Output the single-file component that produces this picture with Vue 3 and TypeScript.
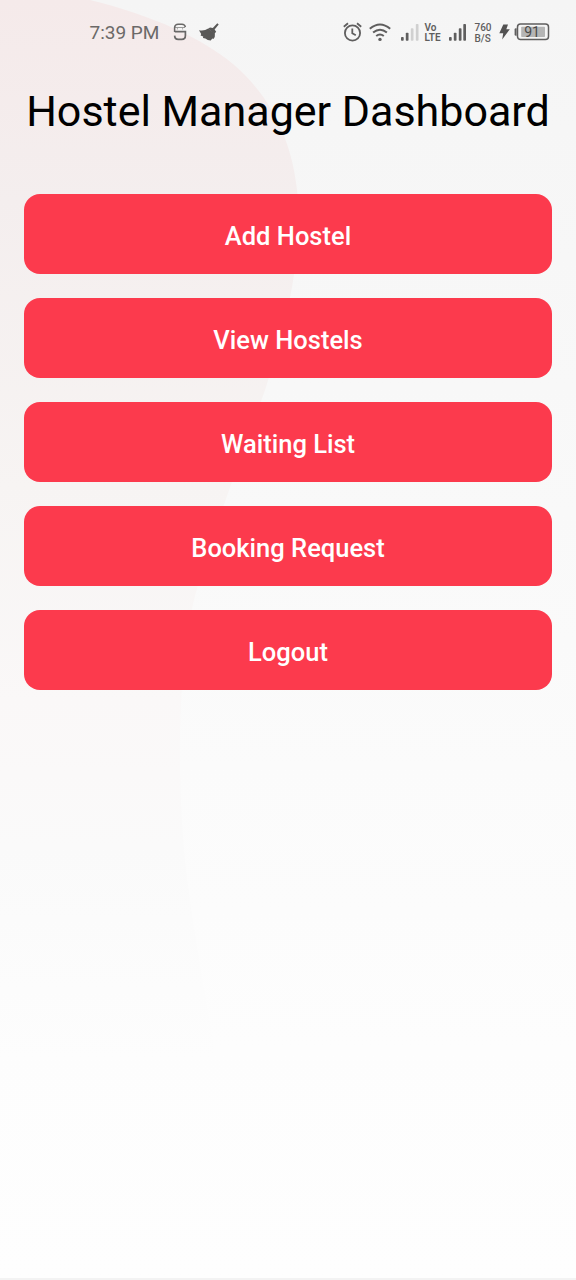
<script setup lang="ts">
const actions: string[] = [
  'Add Hostel',
  'View Hostels',
  'Waiting List',
  'Booking Request',
  'Logout',
]
</script>

<template>
  <div class="screen">
    <svg class="backdrop" viewBox="0 0 576 1280" aria-hidden="true">
      <defs>
        <linearGradient id="base" x1="0" y1="0" x2="0" y2="1">
          <stop offset="0" stop-color="#f5f5f5" />
          <stop offset="0.3" stop-color="#f8f8f8" />
          <stop offset="0.6" stop-color="#fbfbfb" />
          <stop offset="0.82" stop-color="#fdfdfd" />
          <stop offset="1" stop-color="#fefefe" />
        </linearGradient>
        <linearGradient id="wave" gradientUnits="userSpaceOnUse" x1="0" y1="0" x2="0" y2="1060">
          <stop offset="0" stop-color="#f5eaea" />
          <stop offset="0.19" stop-color="#f4eeee" />
          <stop offset="0.46" stop-color="#f7f4f3" />
          <stop offset="0.66" stop-color="#faf8f8" />
          <stop offset="0.8" stop-color="#fafafa" />
          <stop offset="1" stop-color="#fdfdfd" />
        </linearGradient>
      </defs>
      <rect width="576" height="1280" fill="url(#base)" />
      <path
        d="M0 0H90C155 16 203 39 233 64C272 97 292 142 297 190C303 245 291 312 265 390C240 462 212 532 195 596C177 664 175 800 190 900C196 945 205 990 216 1060H0Z"
        fill="url(#wave)"
      />
    </svg>

    <header class="status">
      <span class="clock">7:39 PM</span>
      <svg class="s-icon" width="14" height="18" viewBox="0 0 14 18" fill="none" stroke="#696867">
        <path d="M1.8 8.7H12.4V12.5Q12.4 16.4 8.8 16.4H5.2Q1.9 16.4 1.6 12.6" stroke-width="1.7" />
        <path d="M1.6 9V4.2Q2.2 1.2 5 1.2H9Q11.8 1.2 12.4 4.2" stroke-width="1.5" />
        <path d="M2 4.5H12M4.4 5.2V6.4M9.6 5.2V6.4" stroke-width="1" opacity=".65" />
      </svg>
      <svg class="broom" width="20" height="18" viewBox="0 0 20 18" fill="#595857">
        <path d="M18.3 .3L19.7 1.5L15.6 6.6L17.2 8.8L15.4 10.8L9.2 5.7L11 4.4L13.8 5.1Z" />
        <path d="M9.2 5.6L15.9 10.6Q16.4 14 14.4 16L13.2 15.6L11.8 17.6Q8.4 17.4 6.4 15.6L4 15L4.2 13.6L1.6 12.4L2.2 11L0 7.2Q5.2 8.3 9.2 5.6Z" />
      </svg>

      <svg class="alarm" width="19" height="20" viewBox="0 0 19 20" fill="none" stroke="#5f5e5e" stroke-width="1.8">
        <circle cx="9.5" cy="11" r="7.6" />
        <path d="M9.3 6.5V11.3L12.8 13.3M.8 4.8L5 1.3M18.2 4.8L14 1.3" />
      </svg>
      <svg class="wifi" width="22" height="19" viewBox="0 0 22 19" fill="none" stroke="#5f5e5e" stroke-width="2">
        <path d="M.8 5.8Q11-2.7 21.2 5.8M4.1 9.6Q11 3.8 17.9 9.6M7.2 13Q11 9.9 14.8 13" />
        <circle cx="11" cy="16.4" r="1.7" fill="#5f5e5e" stroke="none" />
      </svg>
      <svg class="signal weak" width="18" height="18" viewBox="0 0 18 18" fill="#5f5e5e">
        <rect x="0" y="14" width="2.7" height="3.7" rx=".8" />
        <rect x="4.8" y="9.8" width="2.7" height="7.9" rx=".8" />
        <rect x="9.8" y="5.3" width="2.7" height="12.4" rx=".8" fill="#d0d0d0" />
        <rect x="14.8" y="1" width="2.7" height="16.7" rx=".8" fill="#d0d0d0" />
      </svg>
      <span class="stack volte"><span>Vo</span><span>LTE</span></span>
      <svg class="signal strong" width="18" height="18" viewBox="0 0 18 18" fill="#5f5e5e">
        <rect x="0" y="14" width="2.7" height="3.7" rx=".8" />
        <rect x="4.8" y="9.8" width="2.7" height="7.9" rx=".8" />
        <rect x="9.8" y="5.3" width="2.7" height="12.4" rx=".8" />
        <rect x="14.3" y="1" width="2.7" height="16.7" rx=".8" />
      </svg>
      <span class="stack speed"><span>760</span><span>B/S</span></span>
      <svg class="bolt" width="11" height="16" viewBox="0 0 11 16">
        <path d="M4.3 .5H9L7.3 5.3H10.8L3.2 15.5L4.2 9.2H.3Z" fill="#535252" />
      </svg>
      <svg class="battery" width="36" height="18" viewBox="0 0 36 18">
        <path d="M2.6 5.2H2Q.6 5.2 .6 6.6V11.4Q.6 12.8 2 12.8H2.6Z" fill="#5f5e5e" />
        <rect x="3.5" y="1" width="31" height="15.5" rx="3" fill="none" stroke="#5f5e5e" stroke-width="1.5" />
        <rect x="7.2" y="3.7" width="23.8" height="10.3" rx=".7" fill="#b5b5b5" />
        <text x="18" y="13.6" text-anchor="middle" class="charge">91</text>
      </svg>
    </header>

    <h1 class="title">Hostel Manager Dashboard</h1>

    <nav class="actions">
      <button v-for="action in actions" :key="action" type="button" class="action">
        {{ action }}
      </button>
    </nav>
    <div class="bottom-edge"></div>
  </div>
</template>

<style>
body {
  margin: 0;
}
</style>

<style scoped>
.screen {
  position: relative;
  isolation: isolate;
  display: flex;
  flex-direction: column;
  width: 576px;
  height: 1280px;
  overflow: hidden;
  font-family: Roboto, 'Liberation Sans', sans-serif;
}

.backdrop {
  position: absolute;
  inset: 0;
  z-index: -1;
  width: 100%;
  height: 100%;
}

.status {
  display: flex;
  align-items: center;
  box-sizing: border-box;
  height: 64px;
  padding-left: 89.5px;
  color: #5f5e5e;
}

.status > * {
  flex: none;
}

.clock {
  width: 83.5px;
  padding-top: 2px;
  font-size: 19px;
  line-height: 24px;
  white-space: nowrap;
  color: #6b6968;
}

.broom {
  margin-left: 12px;
}

.alarm {
  margin-left: 123.5px;
}

.wifi {
  margin-left: 7px;
}

.signal.weak {
  margin-left: 10px;
}

.stack {
  display: flex;
  flex-direction: column;
  font-size: 10px;
  font-weight: 500;
  line-height: 11px;
}

.volte {
  width: 18px;
  margin-left: 6px;
  font-weight: 600;
  line-height: 10px;
  padding-top: 1px;
}

.signal.strong {
  margin-left: 6px;
}

.speed {
  width: 18px;
  margin-left: 8px;
  padding-top: 2px;
}

.bolt {
  margin-left: 6px;
}

.battery {
  margin-left: 4px;
}

.charge {
  font-size: 14px;
  fill: #4b4a4a;
}

.title {
  margin: 17px 0 0;
  font-size: 43px;
  font-weight: 400;
  line-height: 60px;
  text-align: center;
  white-space: nowrap;
  color: #000;
}

.actions {
  display: flex;
  flex-direction: column;
  gap: 24px;
  margin: 53.3px 24px 0;
}

.action {
  height: 80px;
  padding: 4px 0 0;
  border: 0;
  border-radius: 16px;
  background: #fc3a4d;
  color: #fff;
  font-family: inherit;
  font-size: 25.5px;
  font-weight: 500;
  line-height: 32px;
}

.bottom-edge {
  height: 2px;
  margin-top: auto;
  background: #f3f3f3;
}
</style>
